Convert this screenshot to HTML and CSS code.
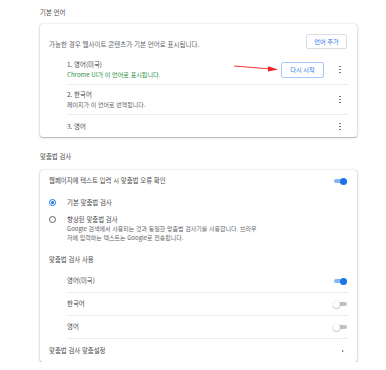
FILE: index.html
```html
<!DOCTYPE html>
<html lang="ko">
<head>
<meta charset="utf-8">
<link rel="stylesheet" href="styles.css">
</head>
<body>
<div class="page">
  <h2 class="section-title first">기본 언어</h2>
  <div class="card lang-card">
    <div class="card-head">
      <span class="head-text">가능한 경우 웹사이트 콘텐츠가 기본 언어로 표시됩니다.</span>
      <button class="btn add-btn">언어 추가</button>
    </div>
    <div class="lang-list">
      <div class="lang-item two">
        <div class="lang-text">
          <div class="primary">1. 영어(미국)</div>
          <div class="green">Chrome UI가 이 언어로 표시됩니다.</div>
        </div>
        <button class="btn restart-btn">다시 시작</button>
        <span class="kebab"><i></i><i></i><i></i></span>
      </div>
      <div class="lang-item two">
        <div class="lang-text">
          <div class="primary">2. 한국어</div>
          <div class="secondary">페이지가 이 언어로 번역됩니다.</div>
        </div>
        <span class="kebab"><i></i><i></i><i></i></span>
      </div>
      <div class="lang-item one">
        <div class="lang-text">
          <div class="primary">3. 영어</div>
        </div>
        <span class="kebab"><i></i><i></i><i></i></span>
      </div>
    </div>
    <svg class="red-arrow" width="50" height="10" viewBox="0 0 50 10">
      <line x1="1" y1="2" x2="38" y2="5" stroke="#f02020" stroke-width="0.9"/>
      <polygon points="35,2.3 45,5.4 35,7.5" fill="#f02020"/>
    </svg>
  </div>

  <h2 class="section-title second">맞춤법 검사</h2>
  <div class="card spell-card">
    <div class="row top-row">
      <span class="primary">웹페이지에 텍스트 입력 시 맞춤법 오류 확인</span>
      <span class="toggle on"></span>
    </div>
    <div class="radio-group">
      <div class="radio-item">
        <span class="radio checked"></span>
        <div class="radio-text">
          <div class="primary">기본 맞춤법 검사</div>
        </div>
      </div>
      <div class="radio-item second-radio">
        <span class="radio"></span>
        <div class="radio-text">
          <div class="primary">향상된 맞춤법 검사</div>
          <div class="secondary">Google 검색에서 사용되는 것과 동일한 맞춤법 검사기를 사용합니다. 브라우<br>저에 입력하는 텍스트는 Google로 전송됩니다.</div>
        </div>
      </div>
    </div>
    <div class="sub-title primary">맞춤법 검사 사용</div>
    <div class="spell-list">
      <div class="row spell-row"><span class="primary">영어(미국)</span><span class="toggle on"></span></div>
      <div class="row spell-row"><span class="primary">한국어</span><span class="toggle"></span></div>
      <div class="row spell-row"><span class="primary">영어</span><span class="toggle"></span></div>
    </div>
    <div class="row custom-row">
      <span class="primary">맞춤법 검사 맞춤설정</span>
      <span class="tri"></span>
    </div>
  </div>
</div>
</body>
</html>
```

FILE: styles.css
```css
* { box-sizing: border-box; }
html, body { margin: 0; padding: 0; background: #fff; }
body {
  font-family: "Noto Sans CJK KR", "Noto Sans", "Liberation Sans", sans-serif;
  font-size: 6px;
  line-height: 10px;
  color: #555;
}
.page {
  margin-left: 40px;
  width: 317px;
}
.section-title {
  margin: 0;
  font-size: 6.4px;
  font-weight: normal;
  line-height: 10px;
  color: #4a4a4a;
}
.section-title.first { padding-top: 8px; margin-bottom: 6px; }
.section-title.second { margin-top: 15px; margin-bottom: 8px; }
.card {
  position: relative;
  background: #fff;
  border-radius: 3px;
  box-shadow: 0 0.5px 1px rgba(60,64,67,0.3), 0 0.5px 2px 0.5px rgba(60,64,67,0.15);
}
.lang-card { padding: 10px 9px 0 9px; height: 113px; }
.card-head {
  display: flex;
  justify-content: space-between;
  align-items: flex-start;
}
.head-text { margin-top: 5px; color: #5f6368; font-size: 6.5px; }
.btn {
  font-family: inherit;
  font-size: 6.2px;
  line-height: 10px;
  color: #1a73e8;
  background: #fff;
  border: 1px solid #dadce0;
  border-radius: 2px;
  padding: 0;
  display: flex;
  align-items: center;
  justify-content: center;
}
.add-btn { width: 41px; height: 15px; margin-right: 1px; }
.restart-btn { width: 43px; height: 16px; margin-right: 8px; border-color: #a8c7fa; }
.lang-list { margin-left: 18px; margin-top: 6px; }
.lang-item {
  display: flex;
  align-items: center;
  border-bottom: 1px solid #ebebeb;
}
.lang-item.two { height: 30px; }
.lang-item.one { height: 23px; border-bottom: none; }
.lang-text { flex: 1; }
.primary { color: #4a4a4a; font-size: 6.4px; }
.secondary { color: #5f6368; font-size: 6px; }
.green { color: #1e8e3e; font-size: 6.1px; }
.kebab {
  width: 16px;
  height: 8px;
  display: flex;
  flex-direction: column;
  align-items: center;
  justify-content: space-between;
}
.kebab i {
  display: block;
  width: 1.3px;
  height: 1.3px;
  border-radius: 50%;
  background: #5f6368;
}
.red-arrow {
  position: absolute;
  left: 193px;
  top: 40px;
}
.spell-card { padding: 0 9px; height: 192px; }
.row {
  display: flex;
  align-items: center;
  justify-content: space-between;
}
.top-row { height: 22px; }
.toggle {
  position: relative;
  width: 14px;
  height: 7px;
  margin-right: 1px;
}
.toggle::before {
  content: "";
  position: absolute;
  left: 0.5px;
  right: 0.5px;
  top: 1.5px;
  height: 4px;
  border-radius: 2px;
  background: #bdc1c6;
}
.toggle::after {
  content: "";
  position: absolute;
  left: 0;
  top: 0;
  width: 7px;
  height: 7px;
  border-radius: 50%;
  background: #fff;
  box-shadow: 0 0.5px 1.2px rgba(0,0,0,0.45);
}
.toggle.on::before { background: #8ab4f8; }
.toggle.on::after { left: auto; right: 0; background: #1a73e8; box-shadow: none; }
.radio-group { padding-top: 6px; line-height: 9px; }
.radio-item { display: flex; align-items: flex-start; }
.second-radio { margin-top: 8px; }
.radio {
  width: 7px;
  height: 7px;
  margin-top: 1px;
  margin-right: 11px;
  border: 1px solid #5f6368;
  border-radius: 50%;
  position: relative;
  flex: none;
}
.radio.checked { border-color: #1a73e8; }
.radio.checked::after {
  content: "";
  position: absolute;
  left: 1px;
  top: 1px;
  width: 3px;
  height: 3px;
  border-radius: 50%;
  background: #1a73e8;
}
.sub-title { margin-top: 13px; }
.spell-list { margin-left: 18px; margin-top: 5px; }
.spell-row { height: 23px; border-bottom: 1px solid #ebebeb; }
.custom-row { height: 23px; }
.tri {
  width: 0;
  height: 0;
  border-top: 1.5px solid transparent;
  border-bottom: 1.5px solid transparent;
  border-left: 2px solid #5f6368;
  margin-right: 4px;
}
```
